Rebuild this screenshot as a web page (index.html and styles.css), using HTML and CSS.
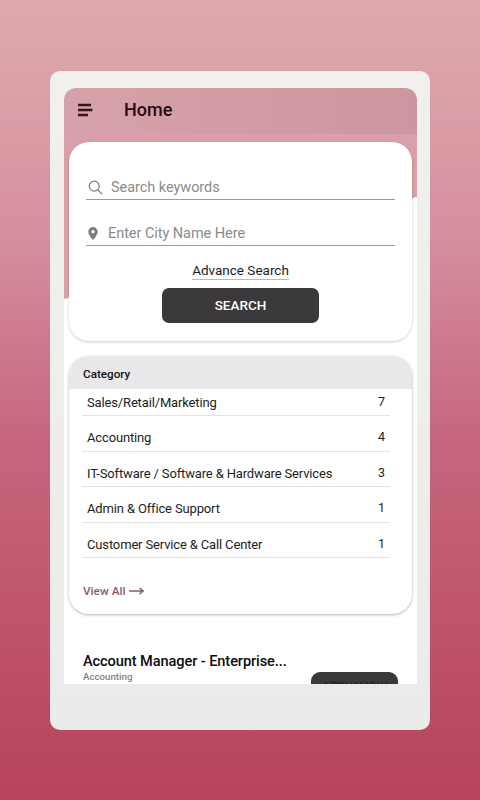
FILE: index.html
```html
<!DOCTYPE html>
<html lang="en">
<head>
    <meta charset="UTF-8">
    <meta name="viewport" content="width=device-width, initial-scale=1.0">
    <title>Home</title>
    <link rel="stylesheet" href="styles.css">
</head>
<body>
    <div class="shell">
        <div class="screen">
            <div class="hero"></div>
            <header class="topbar">
                <svg class="menu-icon" width="15" height="14" viewBox="0 0 15 14">
                    <path d="M0 2h13M0 7h14.500M0 12h10" stroke="#33151c" stroke-width="2.400" fill="none"/>
                </svg>
                <h1 class="title">Home</h1>
            </header>

            <section class="search-card">
                <div class="field field-keywords">
                    <svg width="15" height="15" viewBox="0 0 17 17">
                        <circle cx="7" cy="7" r="5.600" stroke="#7d7d7d" stroke-width="1.400" fill="none"/>
                        <path d="M11 11l5 5" stroke="#7d7d7d" stroke-width="1.400" fill="none"/>
                    </svg>
                    <span>Search keywords</span>
                </div>
                <div class="field field-city">
                    <svg width="10" height="13" viewBox="0 0 10 13">
                        <path fill-rule="evenodd" d="M5 0a4.700 4.700 0 0 1 4.700 4.700C9.700 8 5 13 5 13S.3 8 .3 4.700A4.700 4.700 0 0 1 5 0zm0 3a1.700 1.700 0 1 0 0 3.400A1.700 1.700 0 0 0 5 3z" fill="#7d7d7d"/>
                    </svg>
                    <span>Enter City Name Here</span>
                </div>
                <a class="advance-link">Advance Search</a>
                <button class="search-btn">SEARCH</button>
            </section>

            <section class="category-card">
                <div class="category-head">Category</div>
                <ul class="category-list">
                    <li><span>Sales/Retail/Marketing</span><span class="count">7</span></li>
                    <li><span>Accounting</span><span class="count">4</span></li>
                    <li><span>IT-Software / Software &amp; Hardware Services</span><span class="count">3</span></li>
                    <li><span>Admin &amp; Office Support</span><span class="count">1</span></li>
                    <li><span>Customer Service &amp; Call Center</span><span class="count">1</span></li>
                </ul>
                <a class="view-all">View All
                    <svg width="15" height="8" viewBox="0 0 15 8">
                        <path d="M0 4h13.500M10.500 1l3.500 3-3.500 3" stroke="#8f5a6c" stroke-width="1.500" fill="none"/>
                    </svg>
                </a>
            </section>

            <section class="job">
                <div class="job-text">
                    <div class="job-title">Account Manager - Enterprise...</div>
                    <div class="job-cat">Accounting</div>
                </div>
                <button class="apply-btn">APPLY NOW</button>
            </section>
        </div>
    </div>
</body>
</html>
```

FILE: styles.css
```css
* {
    box-sizing: border-box;
}
html, body {
    height: 100%;
}
body {
    margin: 0;
    padding-top: 71px;
    font-family: Roboto, "Liberation Sans", sans-serif;
    background: linear-gradient(180deg, #dfa9af 0%, #d58f9c 30%, #c6667c 55%, #b7425b 100%);
    color: #111;
}
.shell {
    width: 380px;
    height: 659px;
    margin-left: 50px;
    padding: 17px 13px 46px 14px;
    background: linear-gradient(180deg, #f0f0ec 0%, #ebebeb 100%);
    border-radius: 10px;
}
.screen {
    position: relative;
    height: 596px;
    background: #fff;
    border-radius: 12px 12px 0 0;
    overflow: hidden;
}
.hero {
    position: absolute;
    top: 46px;
    left: 0;
    width: 100%;
    height: 165px;
    background: #d9a0aa;
    clip-path: polygon(0 0, 100% 0, 100% 38%, 0 100%);
}
.topbar {
    position: relative;
    display: flex;
    align-items: center;
    height: 46px;
    padding-left: 14px;
    background: linear-gradient(90deg, #d7a1a9, #cb969d);
}
.menu-icon {
    margin-top: -3px;
}
.title {
    margin: 0 0 0 31px;
    font-size: 18px;
    font-weight: 500;
    color: #26090f;
    position: relative;
    top: -2px;
}
.search-card {
    position: relative;
    display: flex;
    flex-direction: column;
    align-items: center;
    height: 199px;
    margin: 8px 5px 0;
    padding-top: 34px;
    background: #fff;
    border-radius: 20px;
    box-shadow: 0 1px 3px rgba(0, 0, 0, 0.2);
}
.field {
    display: flex;
    align-items: center;
    align-self: flex-start;
    width: 309px;
    height: 24px;
    margin-left: 17px;
    border-bottom: 1.500px solid #9a9a9a;
    font-size: 14.500px;
    letter-spacing: -0.05px;
    color: #8b8b8b;
}
.field-keywords svg {
    margin-left: 2px;
    margin-right: 8px;
}
.field-city {
    margin-top: 22px;
}
.field-city svg {
    margin-left: 2px;
    margin-right: 10px;
}
.advance-link {
    margin-top: 16px;
    font-size: 13.500px;
    line-height: 17px;
    color: #1c1c1c;
    border-bottom: 1px solid #b9b9b9;
}
.search-btn {
    width: 157px;
    height: 35px;
    margin-top: 8px;
    padding-bottom: 2px;
    border: none;
    border-radius: 7px;
    background: #3b393c;
    color: #fff;
    font-family: inherit;
    font-size: 13.500px;
    font-weight: 500;
}
.category-card {
    height: 258px;
    margin: 15px 5px 0;
    background: #fff;
    border-radius: 20px;
    overflow: hidden;
    box-shadow: 0 1px 3px rgba(0, 0, 0, 0.3);
}
.category-head {
    height: 33px;
    padding: 11px 0 0 14px;
    background: #e8e7e9;
    font-size: 11.700px;
    line-height: 14px;
    font-weight: 500;
    color: #111;
}
.category-list {
    margin: 0 22px 0 13px;
    padding: 0;
    list-style: none;
}
.category-list li {
    display: flex;
    justify-content: space-between;
    height: 35.600px;
    padding: 6px 5px 0 5px;
    border-bottom: 1px solid #e3e3e3;
    font-size: 13px;
    letter-spacing: -0.15px;
    line-height: 16px;
    color: #1d1d1d;
}
.category-list li:first-child {
    height: 27px;
    padding-top: 6px;
}
.category-list li:nth-child(n+2) {
    padding-top: 14px;
}
.count {
    font-size: 12.500px;
    margin-top: -1px;
}
.view-all {
    display: flex;
    align-items: center;
    gap: 4px;
    margin: 26px 0 0 14px;
    font-size: 11.800px;
    font-weight: 500;
    color: #8f5a6c;
}
.job {
    display: flex;
    justify-content: space-between;
    margin-top: 38px;
    padding: 0 19px 0 19px;
}
.job-title {
    font-size: 14.600px;
    letter-spacing: -0.1px;
    font-weight: 500;
    color: #0d0d0d;
    line-height: 18px;
}
.job-cat {
    margin-top: 1px;
    font-size: 9.700px;
    font-weight: 500;
    color: #828282;
}
.apply-btn {
    flex: none;
    width: 87px;
    height: 30px;
    margin-top: 20px;
    border: none;
    border-radius: 9px;
    background: #3b393c;
    color: #1c1c1c;
    font-family: inherit;
    font-size: 12px;
}
```
